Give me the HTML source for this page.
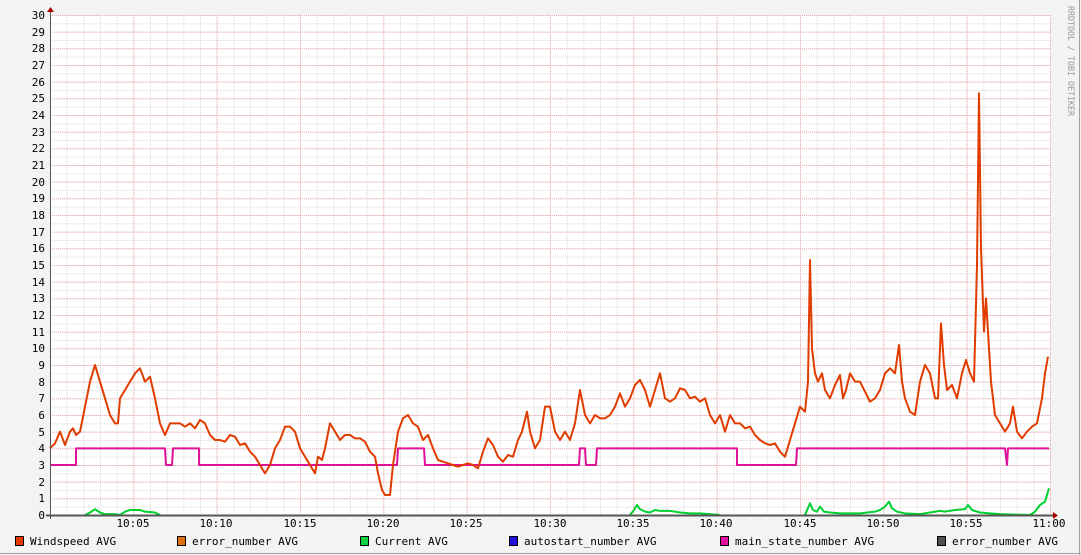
<!DOCTYPE html>
<html><head><meta charset="utf-8"><style>
body{margin:0;background:#f3f3f3;width:1081px;height:555px;overflow:hidden;font-family:"DejaVu Sans Mono","Liberation Mono",monospace}
</style></head><body>
<svg width="1081" height="555" xmlns="http://www.w3.org/2000/svg" style="position:absolute;left:0;top:0">
<defs>
<pattern id="minor" x="50" y="15" width="16.667" height="8.333" patternUnits="userSpaceOnUse">
<line x1="0.5" y1="0" x2="0.5" y2="8.333" stroke="#d8d8d8" stroke-dasharray="1,1"/>
<line x1="0" y1="0.5" x2="16.667" y2="0.5" stroke="#d8d8d8" stroke-dasharray="1,1"/>
</pattern>
<pattern id="major" x="50" y="15" width="83.333" height="16.667" patternUnits="userSpaceOnUse">
<line x1="0.5" y1="0" x2="0.5" y2="16.667" stroke="#f0a8a8" stroke-dasharray="1,1"/>
<line x1="0" y1="0.5" x2="83.333" y2="0.5" stroke="#f0a8a8" stroke-dasharray="1,1"/>
</pattern>
</defs>
<rect x="0" y="0" width="1081" height="555" fill="#f3f3f3"/>
<line x1="1079.5" y1="0" x2="1079.5" y2="555" stroke="#a0a0a0"/>
<line x1="0" y1="553.5" x2="1081" y2="553.5" stroke="#a0a0a0"/>
<rect x="50" y="15" width="1001" height="500" fill="#fff"/>
<rect x="50" y="15" width="1001" height="500" fill="url(#minor)"/>
<rect x="50" y="15" width="1001" height="500" fill="url(#major)"/>
<g font-size="11" fill="#000" text-anchor="end">
<text x="45" y="19">30</text><text x="45" y="36">29</text><text x="45" y="52">28</text><text x="45" y="69">27</text><text x="45" y="86">26</text><text x="45" y="102">25</text><text x="45" y="119">24</text><text x="45" y="136">23</text><text x="45" y="152">22</text><text x="45" y="169">21</text><text x="45" y="186">20</text><text x="45" y="202">19</text><text x="45" y="219">18</text><text x="45" y="236">17</text><text x="45" y="252">16</text><text x="45" y="269">15</text><text x="45" y="286">14</text><text x="45" y="302">13</text><text x="45" y="319">12</text><text x="45" y="336">11</text><text x="45" y="352">10</text><text x="45" y="369">9</text><text x="45" y="386">8</text><text x="45" y="402">7</text><text x="45" y="419">6</text><text x="45" y="436">5</text><text x="45" y="452">4</text><text x="45" y="469">3</text><text x="45" y="486">2</text><text x="45" y="502">1</text><text x="45" y="519">0</text>
</g>
<g font-size="11" fill="#000" text-anchor="middle">
<text x="133" y="527">10:05</text><text x="216" y="527">10:10</text><text x="300" y="527">10:15</text><text x="383" y="527">10:20</text><text x="466" y="527">10:25</text><text x="550" y="527">10:30</text><text x="633" y="527">10:35</text><text x="716" y="527">10:40</text><text x="800" y="527">10:45</text><text x="883" y="527">10:50</text><text x="966" y="527">10:55</text><text x="1049" y="527">11:00</text>
</g>
<g transform="translate(0,515) scale(1,-16.667)" fill="none" stroke-linejoin="round">
<polyline vector-effect="non-scaling-stroke" stroke="#00d030" stroke-width="2" points="85,0 90,0.15 95,0.35 100,0.15 105,0.05 115,0.05 120,0 125,0.2 130,0.3 140,0.3 145,0.2 155,0.15 160,0"/>
<polyline vector-effect="non-scaling-stroke" stroke="#00d030" stroke-width="2" points="630,0 634,0.3 637,0.6 640,0.35 645,0.2 650,0.15 655,0.3 660,0.25 670,0.25 680,0.15 690,0.1 700,0.1 720,0"/>
<polyline vector-effect="non-scaling-stroke" stroke="#00d030" stroke-width="2" points="805,0 810,0.7 813,0.3 817,0.2 820,0.5 824,0.2 830,0.15 840,0.1 860,0.1 875,0.2 880,0.3 885,0.5 889,0.8 892,0.4 897,0.2 905,0.1 920,0.05 930,0.15 940,0.25 945,0.2 955,0.3 965,0.35 968,0.6 972,0.3 980,0.15 990,0.1 1000,0.05 1030,0 1035,0.2 1040,0.6 1045,0.8 1049,1.6"/>
<polyline vector-effect="non-scaling-stroke" stroke="#e0109a" stroke-width="2" points="50,3 76,3 76,4 165,4 166,3 172,3 173,4 199,4 199,3 397,3 398,4 424,4 425,3 579,3 580,4 585,4 586,3 596,3 597,4 737,4 737,3 796,3 797,4 1005,4 1007,3 1008,4 1049,4"/>
<polyline vector-effect="non-scaling-stroke" stroke="#e03c00" stroke-width="2" points="50,4 55,4.3 60,5 65,4.2 70,5 73,5.2 76,4.8 80,5 85,6.5 90,8 95,9 100,8 105,7 110,6 115,5.5 118,5.5 120,7 125,7.5 130,8 135,8.5 140,8.8 145,8 150,8.3 155,7 160,5.5 165,4.8 170,5.5 180,5.5 185,5.3 190,5.5 195,5.2 200,5.7 205,5.5 210,4.8 215,4.5 220,4.5 225,4.4 230,4.8 235,4.7 240,4.2 245,4.3 250,3.8 255,3.5 260,3 265,2.5 270,3 275,4 280,4.5 285,5.3 290,5.3 295,5 300,4 305,3.5 310,3 315,2.5 318,3.5 322,3.3 325,4 330,5.5 335,5 340,4.5 345,4.8 350,4.8 355,4.6 360,4.6 365,4.4 370,3.8 375,3.5 378,2.5 382,1.5 385,1.2 390,1.2 393,3 398,5 403,5.8 408,6 413,5.5 418,5.3 423,4.5 428,4.8 433,4 438,3.3 443,3.2 448,3.1 453,3 458,2.9 463,3 468,3.1 473,3 478,2.8 483,3.8 488,4.6 493,4.2 498,3.5 503,3.2 508,3.6 513,3.5 518,4.5 522,5 527,6.2 530,5 535,4 540,4.5 545,6.5 550,6.5 555,5 560,4.5 565,5 570,4.5 575,5.5 580,7.5 585,6 590,5.5 595,6 600,5.8 605,5.8 610,6 615,6.5 620,7.3 625,6.5 630,7 635,7.8 640,8.1 645,7.5 650,6.5 655,7.5 660,8.5 665,7 670,6.8 675,7 680,7.6 685,7.5 690,7 695,7.1 700,6.8 705,7 710,6 715,5.5 720,6 725,5 730,6 735,5.5 740,5.5 745,5.2 750,5.3 755,4.8 760,4.5 765,4.3 770,4.2 775,4.3 780,3.8 785,3.5 790,4.5 795,5.5 800,6.5 805,6.2 808,8 810,15.3 812,10 815,8.5 818,8 822,8.5 825,7.5 830,7 835,7.8 840,8.4 843,7 846,7.5 850,8.5 855,8 860,8 865,7.4 870,6.8 875,7 880,7.5 885,8.5 890,8.8 895,8.5 899,10.2 902,8 905,7 910,6.2 915,6 920,8 925,9 930,8.5 935,7 938,7 941,11.5 944,9 947,7.5 952,7.8 957,7 962,8.5 966,9.3 970,8.5 974,8 977,15 979,25.3 981,16 984,11 986,13 988,11 991,8 995,6 1000,5.5 1005,5 1010,5.5 1013,6.5 1017,5 1022,4.6 1027,5 1032,5.3 1037,5.5 1042,7 1045,8.5 1048,9.5"/>
</g>
<line x1="50.5" y1="10" x2="50.5" y2="519" stroke="#555"/>
<line x1="46" y1="515.5" x2="1055" y2="515.5" stroke="#555" stroke-width="2"/>
<polygon points="47,12 54,12 50.5,7" fill="#a00"/>
<polygon points="1053,512 1053,519 1058,515.5" fill="#a00"/>
<text transform="translate(1068,6) rotate(90)" font-size="9" fill="#999" textLength="110" lengthAdjust="spacingAndGlyphs">RRDTOOL / TOBI OETIKER</text>
<g font-size="11" fill="#000">
<rect x="15.5" y="536.5" width="8" height="9" fill="#e03c00" stroke="#000"/><text x="30" y="545">Windspeed AVG</text>
<rect x="177.5" y="536.5" width="8" height="9" fill="#e07010" stroke="#000"/><text x="192" y="545">error_number AVG</text>
<rect x="360.5" y="536.5" width="8" height="9" fill="#10d040" stroke="#000"/><text x="375" y="545">Current AVG</text>
<rect x="509.5" y="536.5" width="8" height="9" fill="#2010e0" stroke="#000"/><text x="524" y="545">autostart_number AVG</text>
<rect x="720.5" y="536.5" width="8" height="9" fill="#e010a0" stroke="#000"/><text x="735" y="545">main_state_number AVG</text>
<rect x="937.5" y="536.5" width="8" height="9" fill="#505050" stroke="#000"/><text x="952" y="545">error_number AVG</text>
</g>
</svg>
</body></html>
